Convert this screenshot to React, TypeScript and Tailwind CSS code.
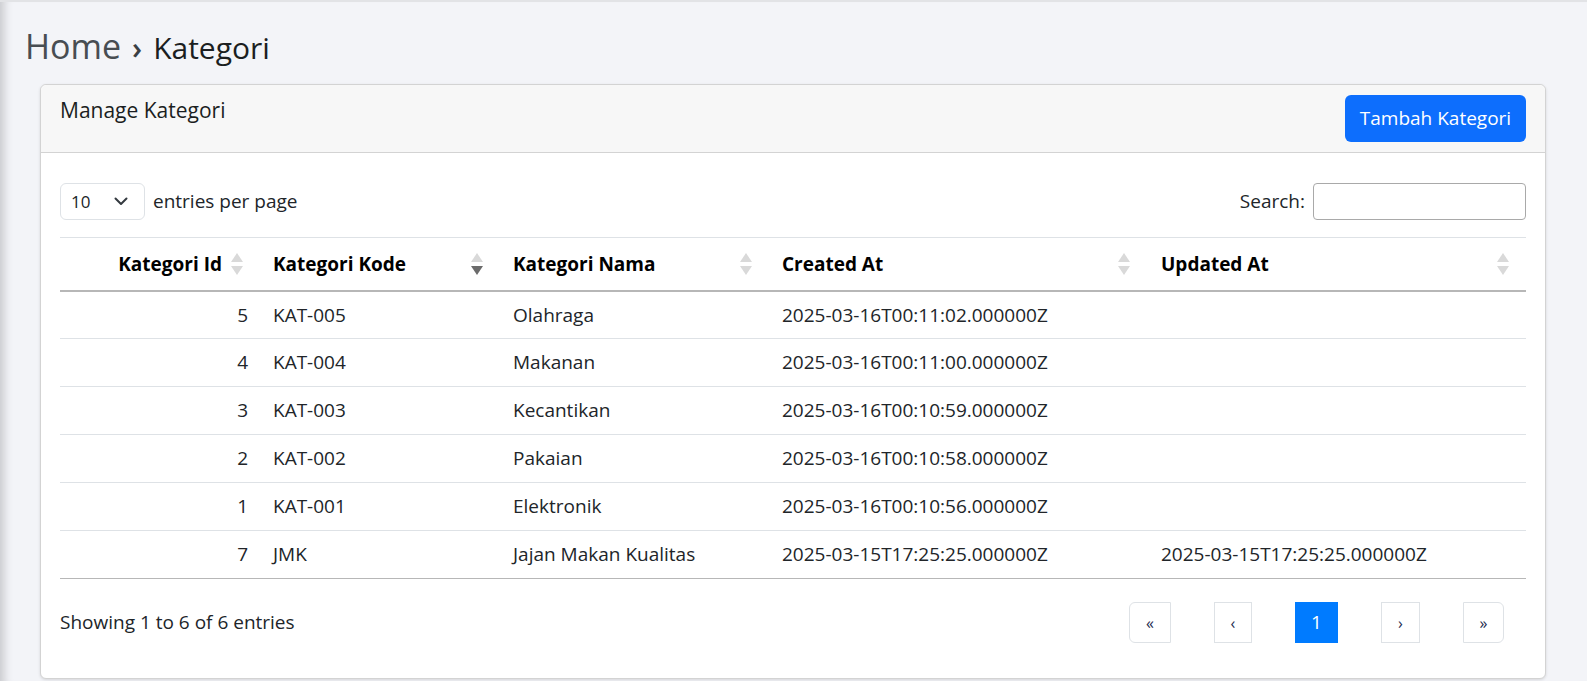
import React from "react";

const rows = [
  { id: 5, kode: "KAT-005", nama: "Olahraga", created: "2025-03-16T00:11:02.000000Z", updated: "" },
  { id: 4, kode: "KAT-004", nama: "Makanan", created: "2025-03-16T00:11:00.000000Z", updated: "" },
  { id: 3, kode: "KAT-003", nama: "Kecantikan", created: "2025-03-16T00:10:59.000000Z", updated: "" },
  { id: 2, kode: "KAT-002", nama: "Pakaian", created: "2025-03-16T00:10:58.000000Z", updated: "" },
  { id: 1, kode: "KAT-001", nama: "Elektronik", created: "2025-03-16T00:10:56.000000Z", updated: "" },
  { id: 7, kode: "JMK", nama: "Jajan Makan Kualitas", created: "2025-03-15T17:25:25.000000Z", updated: "2025-03-15T17:25:25.000000Z" },
];

function SortIcon({ down = false }: { down?: boolean }) {
  return (
    <svg width="12" height="22" viewBox="0 0 12 22" className="block">
      <polygon points="6,0 12,9 0,9" fill="#d9d9d9" />
      <polygon points="0,13 12,13 6,22" fill={down ? "#6b6b6b" : "#d9d9d9"} />
    </svg>
  );
}

export default function App() {
  return (
    <div className="min-h-[681px] bg-[#f3f4f8] border-t-2 border-[#e2e3e6] font-['Open_Sans',sans-serif] text-[#212529] shadow-[inset_12px_0_10px_-8px_rgba(0,0,0,0.18)]">
      <div className="pl-[25px] pt-[22px] h-[82px]">
        <h1 className="leading-[44px] font-normal flex items-baseline">
          <span className="text-[34px] text-[#484d52]">Home</span>
          <span className="text-[30px] text-[#3a3f44] font-semibold ml-[11px] mr-[11px]">›</span>
          <span className="text-[30px] text-[#1b1e21]">Kategori</span>
        </h1>
      </div>
      <div className="ml-[40px] mr-[41px] bg-white border border-[#d3d3d3] rounded-[6px] shadow-[0_1px_3px_rgba(0,0,0,0.12)] h-[595px] flex flex-col">
        <div className="bg-[#f7f7f7] border-b border-[#d3d3d3] rounded-t-[6px] h-[68px] flex items-start justify-between pl-[19px] pr-[19px] pt-[10px]">
          <div className="text-[21px] leading-[30px] text-[#1b1e21]">Manage Kategori</div>
          <button className="bg-[#0d6efd] text-white rounded-[6px] w-[181px] h-[47px] text-[19px] leading-[47px]">
            Tambah Kategori
          </button>
        </div>
        <div className="px-[19px] pt-[30px]">
          <div className="flex items-center justify-between h-[37px]">
            <div className="flex items-center gap-[8px]">
              <div className="w-[85px] h-[37px] border border-[#dee2e6] rounded-[6px] flex items-center justify-between pl-[10px] pr-[16px] text-[17px]">
                <span>10</span>
                <svg width="14" height="9" viewBox="0 0 14 9" fill="none">
                  <path d="M1.5 1.5 L7 7 L12.5 1.5" stroke="#343a40" strokeWidth="2" strokeLinecap="round" strokeLinejoin="round" />
                </svg>
              </div>
              <span className="text-[19px]">entries per page</span>
            </div>
            <div className="flex items-center gap-[8px]">
              <span className="text-[19px]">Search:</span>
              <input className="w-[213px] h-[37px] border border-[#a9a9a9] rounded-[4px] bg-white" />
            </div>
          </div>
          <table className="mt-[17px] w-[1466px] table-fixed border-collapse text-[19px]">
            <colgroup>
              <col className="w-[205px]" />
              <col className="w-[240px]" />
              <col className="w-[269px]" />
              <col className="w-[378px]" />
              <col className="w-[374px]" />
            </colgroup>
            <thead>
              <tr className="h-[53px] border-t border-[#dee2e6] border-b-2 border-b-[#b7b7b7]">
                <th className="relative text-right pr-[43px] font-bold text-black">
                  Kategori Id
                  <span className="absolute right-[22px] top-1/2 -translate-y-1/2"><SortIcon /></span>
                </th>
                <th className="relative text-left pl-[8px] font-bold text-black">
                  Kategori Kode
                  <span className="absolute right-[22px] top-1/2 -translate-y-1/2"><SortIcon down /></span>
                </th>
                <th className="relative text-left pl-[8px] font-bold text-black">
                  Kategori Nama
                  <span className="absolute right-[22px] top-1/2 -translate-y-1/2"><SortIcon /></span>
                </th>
                <th className="relative text-left pl-[8px] font-bold text-black">
                  Created At
                  <span className="absolute right-[22px] top-1/2 -translate-y-1/2"><SortIcon /></span>
                </th>
                <th className="relative text-left pl-[9px] font-bold text-black">
                  Updated At
                  <span className="absolute right-[17px] top-1/2 -translate-y-1/2"><SortIcon /></span>
                </th>
              </tr>
            </thead>
            <tbody>
              {rows.map((r, i) => (
                <tr
                  key={r.id}
                  className={
                    "h-[48px] border-b " + (i === rows.length - 1 ? "border-[#b7b7b7]" : "border-[#dee2e6]")
                  }
                >
                  <td className="text-right pr-[17px]">{r.id}</td>
                  <td className="pl-[8px]">{r.kode}</td>
                  <td className="pl-[8px]">{r.nama}</td>
                  <td className="pl-[8px]">{r.created}</td>
                  <td className="pl-[9px]">{r.updated}</td>
                </tr>
              ))}
            </tbody>
          </table>
          <div className="mt-[23px] flex items-center justify-between">
            <span className="text-[19px]">Showing 1 to 6 of 6 entries</span>
            <div className="flex items-center gap-[43px] mr-[22px] text-[#1d2b4f]">
              <div className="w-[42px] h-[41px] border border-[#dee2e6] rounded-l-[6px] flex items-center justify-center text-[16px]">«</div>
              <div className="w-[38px] h-[41px] border border-[#dee2e6] flex items-center justify-center text-[16px]">‹</div>
              <div className="w-[43px] h-[41px] bg-[#007bff] text-white flex items-center justify-center text-[19px]">1</div>
              <div className="w-[39px] h-[41px] border border-[#dee2e6] flex items-center justify-center text-[16px]">›</div>
              <div className="w-[41px] h-[41px] border border-[#dee2e6] rounded-r-[6px] flex items-center justify-center text-[16px]">»</div>
            </div>
          </div>
        </div>
      </div>
    </div>
  );
}
